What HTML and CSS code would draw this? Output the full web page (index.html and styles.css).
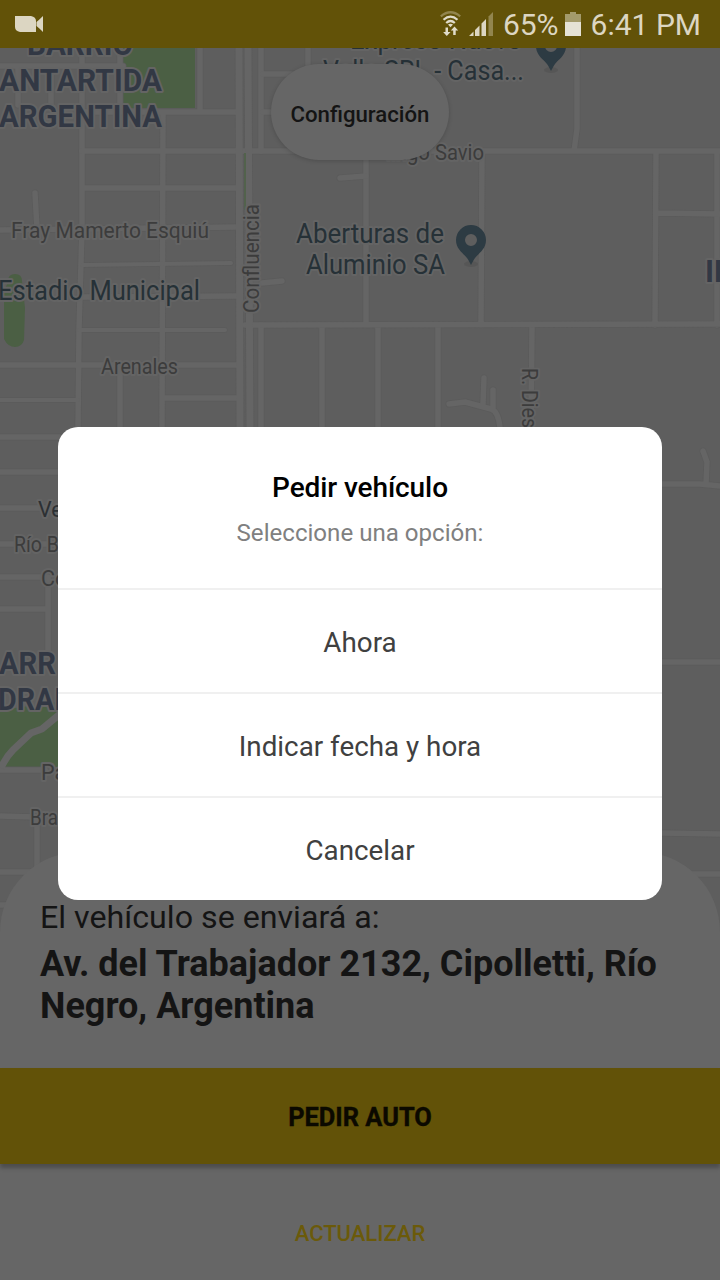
FILE: index.html
```html
<!DOCTYPE html>
<html lang="es">
<head>
<meta charset="utf-8">
<title>Pedir vehículo</title>
<link rel="stylesheet" href="styles.css">
</head>
<body>
<div class="screen">
  <header class="status-bar">
    <svg class="camera-icon" width="28" height="16" viewBox="0 0 28 16"><path d="M0 0h16q5 1 5 5v11H5q-5-1-5-5z"/><path d="M28 0v16q-4-4-6.500-6V6Q24 4 28 0z"/></svg>
    <div class="status-right">
      <svg class="wifi-icon" width="22" height="26" viewBox="0 0 22 26">
        <path class="dim" d="M.8 5.300Q10.500-2.800 20.200 5.300"/>
        <path d="M3.500 8.800q7-6.200 14 0M6.200 12q4.300-4 8.600 0"/>
        <path class="solid" d="M8 13.600q2.500-1.800 5 0l-2.500 2.600zM5.500 16.500H8V21h2.500l-3.700 4-3.700-4h2.400zM13.200 24v-4.500h-2.400l3.700-4 3.700 4h-2.500V24z"/>
      </svg>
      <svg class="signal-icon" width="24" height="24" viewBox="0 0 24 24"><path d="M0 24l4.500-4.500V24zM6 18l4.500-4.500V24H6zM12.500 11.500L17 7v17h-4.500z"/><path class="dim-fill" d="M19.500 4.500L24 0v24h-4.500z"/></svg>
      <span class="battery-level">65%</span>
      <svg class="battery-icon" width="16" height="24" viewBox="0 0 16 24"><path class="dim-fill" d="M0 2h5V0h6v2h5v8H0z"/><path class="charge" d="M0 10h16v14H0z"/></svg>
      <time class="clock">6:41 PM</time>
    </div>
  </header>

  <main class="map-area">
    <svg class="map" width="720" height="884" viewBox="0 48 720 884">
      <defs>
        <g id="roads">
          <path class="w5" d="M82 48V229L79 330 78 427M120 48V112M163 112L162 427M200 48V112M261 48V151M261 325V427M18 66V105M51 66V105M0 66H123M82 112H237M82 188H237M0 230L237 227M82 297L238 296M163 398H238M0 437H60M0 472H60M0 508H60M0 544H60M0 577H48M0 609H48M48 577V655M120 370V427M35 193L37 229"/>
          <path class="w5" d="M82 151H720M0 365H238M245 325L720 324M263 74H300M263 112H273M308 48V90M366 160V325M482 151L481 325M577 48V129L574 151M656 151L655 325M717 151V325M656 213L720 214M322 325V427M378 325V427M438 325V427M532 325L531 427"/>
          <path class="w5" d="M340 178L366 176M262 283L282 281M449 404L465 402 491 409Q498 411 500 427M483 404L484 378M493 408V390M662 484H700L720 486M706 484L707 462 703 451M662 662H720M662 833L720 834M680 874H720M0 770H45M0 816L35 817M37 820V870M0 872H30M0 905H8"/>
          <path class="w3" d="M82 265L231 263M79 330H225M0 400H78"/>
          <path class="w7" d="M239 48L240 427M248 48L250 427"/>
        </g>
      </defs>
      <g class="park"><path d="M123 48H195V108H123zM0 710L58 702V767H0z"/><path d="M8 281q0-7 7-7t7 7l3 27-1 32q-2 7-9 7t-11-8V293z"/></g>
      <use href="#roads" class="road-edge"/>
      <use href="#roads" class="road"/>
      <path class="park-strip" d="M245 153V210"/>
      <path class="diagonal" d="M1 768Q6 757 13 750L31 733 42 729 60 714"/>

      <g class="district">
        <text x="27" y="55" textLength="106" lengthAdjust="spacingAndGlyphs">BARRIO</text>
        <text x="-1" y="91" textLength="163" lengthAdjust="spacingAndGlyphs">ANTARTIDA</text>
        <text x="-1" y="127" textLength="163" lengthAdjust="spacingAndGlyphs">ARGENTINA</text>
        <text x="-1" y="674" textLength="57" lengthAdjust="spacingAndGlyphs">ARR</text>
        <text x="-2" y="710" textLength="85" lengthAdjust="spacingAndGlyphs">DRAIN</text>
        <text x="705" y="282">IN</text>
      </g>
      <g class="place">
        <text x="350" y="49" textLength="172" lengthAdjust="spacingAndGlyphs">Expreso Nuevo</text>
        <text x="323" y="80" textLength="201" lengthAdjust="spacingAndGlyphs">Valle SRL - Casa...</text>
        <text x="296" y="243" textLength="148" lengthAdjust="spacingAndGlyphs">Aberturas de</text>
        <text x="306" y="274" textLength="139" lengthAdjust="spacingAndGlyphs">Aluminio SA</text>
        <text x="-2" y="300" textLength="202" lengthAdjust="spacingAndGlyphs">Estadio Municipal</text>
      </g>
      <g class="street">
        <text x="11" y="238" textLength="198" lengthAdjust="spacingAndGlyphs">Fray Mamerto Esquiú</text>
        <text x="101" y="374" textLength="77" lengthAdjust="spacingAndGlyphs">Arenales</text>
        <text x="386" y="160" textLength="98" lengthAdjust="spacingAndGlyphs">lingo Savio</text>
        <text transform="translate(259 313) rotate(-90)" textLength="109" lengthAdjust="spacingAndGlyphs">Confluencia</text>
        <text transform="translate(522 368) rotate(90)" textLength="60" lengthAdjust="spacingAndGlyphs">R. Dies</text>
        <text class="dark" x="38" y="517">Ve</text>
        <text x="14" y="552" textLength="45" lengthAdjust="spacingAndGlyphs">Río B</text>
        <text x="41" y="586">Co</text>
        <text x="41" y="780">Pa</text>
        <text x="30" y="825" textLength="28" lengthAdjust="spacingAndGlyphs">Bra</text>
      </g>
      <g>
        <ellipse class="pin-shadow" cx="471" cy="264" rx="7" ry="3"/>
        <path class="pin" d="M471 225a15 15 0 0 0-15 15c0 9 7 13 11 18 2 3 3 5 4 7 1-2 2-4 4-7 4-5 11-9 11-18a15 15 0 0 0-15-15zm0 9a6 6 0 1 1 0 12 6 6 0 0 1 0-12z"/>
        <ellipse class="pin-shadow" cx="551" cy="70" rx="7" ry="3"/>
        <path class="pin" transform="translate(80 -194)" d="M471 225a15 15 0 0 0-15 15c0 9 7 13 11 18 2 3 3 5 4 7 1-2 2-4 4-7 4-5 11-9 11-18a15 15 0 0 0-15-15zm0 9a6 6 0 1 1 0 12 6 6 0 0 1 0-12z"/>
      </g>
    </svg>
    <button class="settings">Configuración</button>
  </main>

  <section class="sheet">
    <div class="destination">
      <p class="caption">El vehículo se enviará a:</p>
      <p class="address">Av. del Trabajador 2132, Cipolletti, Río Negro, Argentina</p>
    </div>
    <button class="order">PEDIR AUTO</button>
    <button class="refresh">ACTUALIZAR</button>
  </section>

  <div class="overlay">
    <div class="dialog" role="dialog">
      <div class="dialog-head">
        <h1 class="dialog-title">Pedir vehículo</h1>
        <p class="dialog-text">Seleccione una opción:</p>
      </div>
      <button class="option">Ahora</button>
      <button class="option">Indicar fecha y hora</button>
      <button class="option">Cancelar</button>
    </div>
  </div>
</div>
</body>
</html>
```
FILE: styles.css
```css
* { box-sizing: border-box; }
body { margin: 0; font-family: Roboto, sans-serif; background: #666; }
h1, p { margin: 0; }
button { border: 0; padding: 0; font-family: inherit; background: none; }

.screen {
  position: relative;
  display: flex;
  flex-direction: column;
  width: 720px;
  height: 1280px;
  overflow: hidden;
  background: #5e5e5e;
}

.status-bar {
  display: flex;
  flex: none;
  align-items: center;
  justify-content: space-between;
  height: 48px;
  padding: 0 19px 0 15px;
  background: #625208;
  color: #dcd6c2;
  font-size: 30px;
  line-height: 48px;
}
.status-bar svg { fill: #dcd6c2; }
.status-right { display: flex; align-items: center; }
.status-bar .wifi-icon { margin-right: 7px; fill: none; stroke: #e0dccb; stroke-width: 2.2; }
.status-bar .wifi-icon .dim { stroke: #92854e; }
.status-bar .wifi-icon .solid { fill: #e0dccb; stroke: none; }
.signal-icon { margin-right: 10px; }
.status-bar .dim-fill { fill: #92854e; }
.status-bar .battery-icon .dim-fill { fill: #a39a6b; }
.battery-icon { margin: 0 10px 0 6px; }
.status-bar .charge { fill: #e5e2d6; }
.battery-level, .clock { padding-top: 1px; }

.map-area {
  display: flex;
  position: relative;
  flex: none;
  height: 804px;
  justify-content: center;
  align-items: flex-start;
  padding-top: 16px;
}
.map { position: absolute; top: 0; left: 0; }
.park { fill: #4b5f44; }
.park-strip { stroke: #52624c; stroke-width: 2; }
.road, .road-edge { fill: none; stroke-linecap: round; stroke-linejoin: round; }
.road { stroke: #656565; }
.road-edge { stroke: #5b5b5b; --edge: 1.5px; }
.w3 { stroke-width: calc(4px + var(--edge, 0px)); }
.w5 { stroke-width: calc(5.5px + var(--edge, 0px)); }
.w7 { stroke-width: calc(7px + var(--edge, 0px)); }
.diagonal { fill: none; stroke: #656565; stroke-width: 7; }
.map text { paint-order: stroke; stroke: #646464; stroke-width: 4px; stroke-linejoin: round; }
.district { font-size: 31px; font-weight: 700; fill: #323844; }
.place { font-size: 28px; fill: #263137; }
.street { font-size: 21.5px; fill: #3c3c3c; }
.street .dark { fill: #2c3033; }
.pin { fill: #2d3b43; fill-rule: evenodd; }
.pin-shadow { fill: #525252; opacity: .6; }

.settings {
  position: relative;
  width: 178px;
  height: 96px;
  border-radius: 48px;
  background: #666;
  box-shadow: 0 1px 4px rgba(0, 0, 0, .18);
  color: #141414;
  font-size: 22.2px;
  font-weight: 500;
  padding-top: 3px;
}

.sheet {
  position: relative;
  display: flex;
  flex: 1;
  flex-direction: column;
  border-radius: 80px 80px 0 0;
  background: #666;
}
.destination { height: 216px; padding: 45px 40px 0; color: #141414; }
.caption { font-size: 32.2px; line-height: 40px; }
.address { margin-top: 6px; font-size: 36px; font-weight: 700; line-height: 42px; }
.order {
  height: 96px;
  padding-top: 2px;
  background: #625208;
  box-shadow: 0 4px 4px rgba(0, 0, 0, .25);
  color: #0b0900;
  font-size: 25.400px;
  font-weight: 700;
  -webkit-text-stroke: .4px #0b0900;
}
.refresh { flex: 1; padding-top: 22px; color: #6b5a0a; font-size: 22px; font-weight: 500; }

.overlay {
  position: absolute;
  inset: 0;
  display: flex;
  align-items: center;
  justify-content: center;
  padding-top: 47px;
}
.dialog {
  display: flex;
  flex-direction: column;
  width: 604px;
  height: 473px;
  overflow: hidden;
  border-radius: 20px;
  background: #fff;
  text-align: center;
}
.dialog-head { flex: 1; padding-top: 41px; }
.dialog-title { color: #000; font-size: 28px; font-weight: 500; line-height: 40px; letter-spacing: -.1px; }
.dialog-text { margin-top: 10px; color: #808080; font-size: 24.100px; line-height: 30px; }
.option {
  height: 104px;
  border-top: 2px solid #f0f0f0;
  color: #404040;
  font-size: 27.800px;
  padding-top: 2px;
}
```
